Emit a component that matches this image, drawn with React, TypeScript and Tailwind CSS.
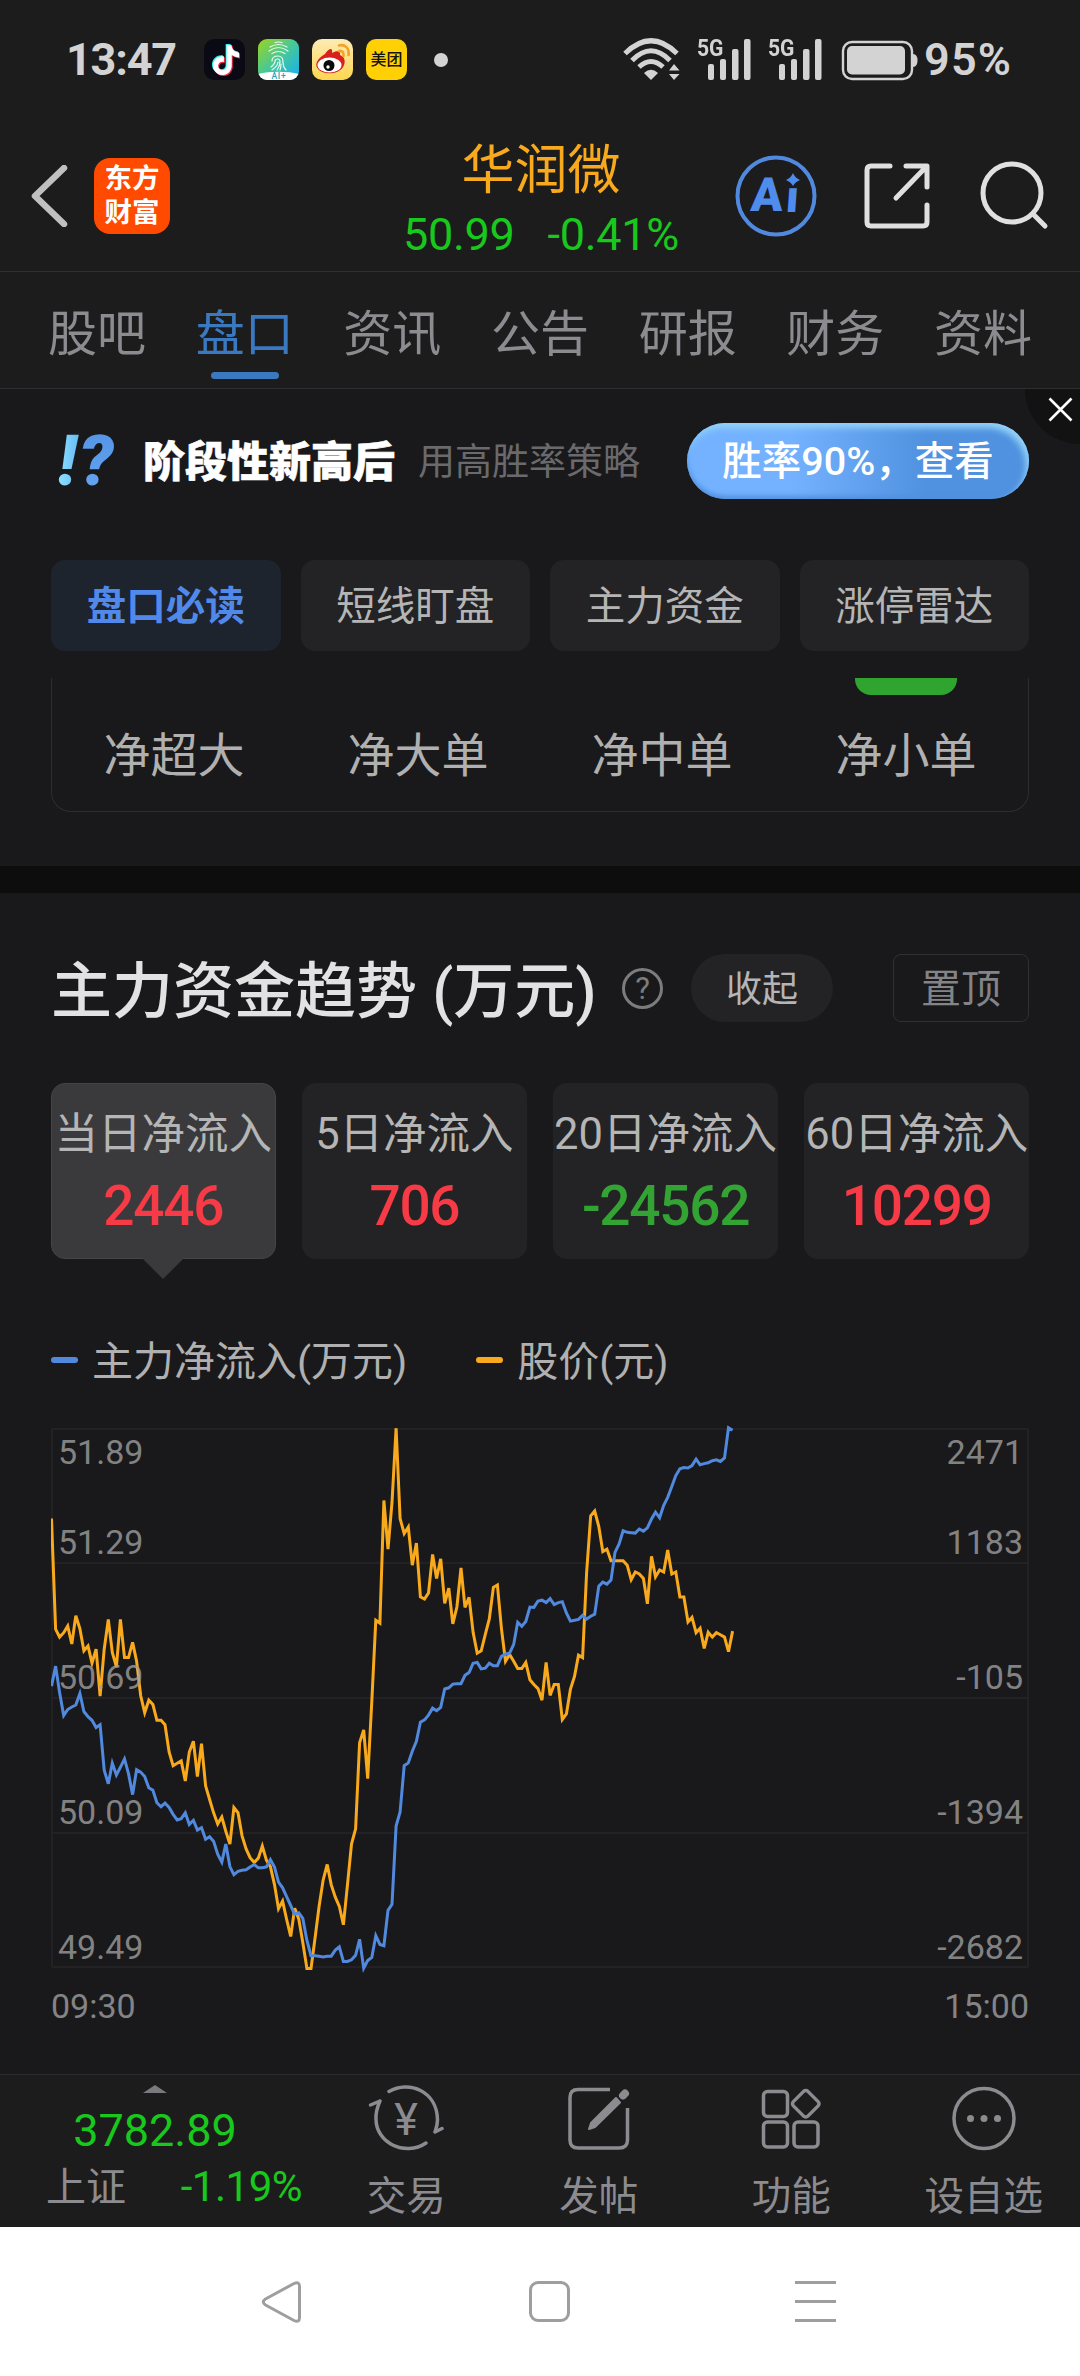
import type { ReactNode } from 'react';
import { clsx } from 'clsx';
import { SiTiktok } from 'react-icons/si';

const tabs = ['股吧', '盘口', '资讯', '公告', '研报', '财务', '资料'];

const pills = ['盘口必读', '短线盯盘', '主力资金', '涨停雷达'];

const orderSizes = [
  { label: '净超大', bar: false },
  { label: '净大单', bar: false },
  { label: '净中单', bar: false },
  { label: '净小单', bar: true },
];

const flows = [
  { label: '当日净流入', value: 2446 },
  { label: '5日净流入', value: 706 },
  { label: '20日净流入', value: -24562 },
  { label: '60日净流入', value: 10299 },
];

// One sample per trading minute, on the scale CHART_TOP..CHART_BOTTOM
const CHART_TOP = 72;
const CHART_BOTTOM = 1411;
const CHART_STEP = 4.054;

const priceLine = [
  295, 570, 590, 579, 562, 607, 537, 569, 624, 612, 655, 620, 737, 620, 546, 628, 664, 546, 641, 641,
  603, 650, 736, 778, 747, 758, 797, 797, 808, 876, 910, 904, 898, 948, 876, 849, 937, 855, 960, 994,
  1028, 1055, 1038, 1073, 1105, 1014, 1027, 1084, 1117, 1139, 1151, 1140, 1110, 1145, 1161, 1206, 1266,
  1247, 1292, 1335, 1265, 1292, 1350, 1415, 1415, 1340, 1260, 1195, 1156, 1206, 1237, 1260, 1306, 1208,
  1105, 1067, 853, 821, 942, 750, 548, 555, 250, 371, 255, 70, 295, 332, 316, 411, 356, 490, 495, 480,
  384, 444, 395, 506, 468, 557, 515, 418, 516, 491, 578, 630, 624, 583, 545, 466, 460, 570, 650, 633,
  650, 668, 668, 653, 696, 708, 718, 747, 653, 735, 708, 708, 795, 781, 720, 688, 635, 641, 430, 288,
  276, 315, 377, 371, 400, 400, 400, 400, 411, 447, 428, 433, 444, 507, 389, 440, 423, 428, 373, 433,
  428, 490, 490, 552, 541, 579, 568, 618, 578, 590, 579, 584, 590, 626, 575,
];

const inflowLine = [
  712, 662, 728, 785, 770, 764, 759, 730, 775, 788, 797, 815, 808, 921, 955, 904, 933, 914, 893, 930,
  982, 920, 926, 937, 965, 971, 1002, 1012, 1003, 1014, 1031, 1045, 1042, 1027, 1056, 1046, 1070, 1064,
  1093, 1087, 1099, 1130, 1150, 1105, 1161, 1181, 1173, 1170, 1169, 1162, 1156, 1164, 1164, 1162, 1144,
  1162, 1200, 1214, 1236, 1258, 1280, 1276, 1290, 1345, 1383, 1383, 1384, 1386, 1384, 1384, 1369, 1361,
  1397, 1397, 1393, 1382, 1342, 1414, 1395, 1387, 1333, 1355, 1358, 1270, 1255, 1060, 1025, 910, 903,
  874, 849, 802, 796, 784, 767, 773, 765, 719, 716, 707, 706, 706, 685, 678, 655, 653, 669, 667, 655,
  661, 661, 638, 632, 630, 608, 553, 563, 551, 515, 516, 500, 498, 504, 494, 509, 504, 502, 530, 550,
  548, 546, 536, 545, 538, 533, 463, 453, 458, 448, 379, 358, 325, 329, 330, 331, 321, 326, 318, 296,
  279, 293, 262, 242, 215, 188, 171, 168, 169, 163, 147, 161, 158, 156, 151, 149, 153, 144, 69, 75,
];

const axis = [
  { line: 10, text: 45, price: '51.89', flow: '2471' },
  { line: 144, text: 135, price: '51.29', flow: '1183' },
  { line: 279, text: 270, price: '50.69', flow: '-105' },
  { line: 414, text: 405, price: '50.09', flow: '-1394' },
  { line: 548, text: 540, price: '49.49', flow: '-2682' },
];

function toPoints(values: number[]) {
  const k = 538 / (CHART_BOTTOM - CHART_TOP);
  return values
    .map((v, i) => `${(0.5 + i * CHART_STEP).toFixed(1)},${(10 + (v - CHART_TOP) * k).toFixed(1)}`)
    .join(' ');
}

function Signal() {
  return (
    <div className="relative h-[44px] w-[55px]">
      <span className="absolute -top-[4px] left-0 origin-left scale-x-[0.880] text-[24px] leading-[30px] font-bold text-[#d3d3d3]">5G</span>
      <svg width="55" height="44" viewBox="0 0 55 44" fill="#d3d3d3">
        <rect x="11" y="27" width="6" height="16" rx="2" />
        <rect x="23" y="22" width="6" height="21" rx="2" />
        <rect x="35" y="12" width="6.5" height="31" rx="2" />
        <rect x="47" y="2" width="6.5" height="41" rx="2" />
      </svg>
    </div>
  );
}

function StatusBar() {
  return (
    <div className="flex h-[118px] items-center pr-[68px] pl-[66px]">
      <span className="w-[138px] pt-[1px] text-[45px] leading-[60px] font-bold tracking-[-1.200px] text-[#d3d3d3]">13:47</span>
      <div className="flex gap-[13px]">
        {/* Douyin */}
        <div className="relative mt-[1px] h-[41px] w-[41px] rounded-[10px] bg-[#0a0a14]">
          <SiTiktok className="absolute top-[5px] left-[6px] h-[30px] w-[30px] text-[#25f4ee]" />
          <SiTiktok className="absolute top-[7px] left-[8px] h-[30px] w-[30px] text-[#fe2c55]" />
          <SiTiktok className="absolute top-[6px] left-[7px] h-[30px] w-[30px] text-white" />
        </div>
        {/* Fingerprint assistant */}
        <svg className="mt-[1px] overflow-visible" width="41" height="41" viewBox="0 0 41 41" fill="none">
          <defs>
            <linearGradient id="finger" x1="0" y1="0" x2="1" y2="1">
              <stop offset="0" stopColor="#9bd51d" />
              <stop offset="0.5" stopColor="#45c79c" />
              <stop offset="1" stopColor="#13aef5" />
            </linearGradient>
            <clipPath id="fingerClip"><rect width="41" height="41" rx="9" /></clipPath>
          </defs>
          <g clipPath="url(#fingerClip)">
            <rect width="41" height="41" fill="url(#finger)" />
            <path d="M0 35C12 32 29 32 41 35V41H0Z" fill="#fff" />
          </g>
          <g stroke="#e9fbef" strokeWidth="1.200" strokeLinecap="round">
            <path d="M17 3.500q3.500-1 7 0M12 8q8.500-5 17 0M11 12q9.500-7 19 0M14 14.500q6.500-4 13 0" />
            <path d="M14 22q0-5 6-5 5 0 5 6 0 5 3 8M13 28q4-3 4-6 0-2 3-2 2 0 2 3 0 4-3 8M14 31q6-4 6-8M23 25q0 3-1 6" />
          </g>
          <text x="21" y="40" textAnchor="middle" fontSize="8.500" letterSpacing="0.800" fontWeight="500" fill="#28a4b8">AI+</text>
        </svg>
        {/* Weibo */}
        <svg className="mt-[1px]" width="41" height="41" viewBox="0 0 41 41" fill="none">
          <defs>
            <linearGradient id="weibo" x1="0" y1="0" x2="0" y2="1">
              <stop offset="0" stopColor="#fdebb4" />
              <stop offset="1" stopColor="#fdd650" />
            </linearGradient>
          </defs>
          <rect width="41" height="41" rx="10" fill="url(#weibo)" />
          <path d="M13 15C17 9 21 8 20 14C25 11 29 12 28 16C33 18 34 23 31 28C27 35 12 37 6 30C1 24 8 18 13 15Z" fill="#d9201c" />
          <ellipse cx="17.500" cy="26" rx="12" ry="7.500" fill="#fff" />
          <circle cx="17" cy="26.500" r="5.500" fill="#0b0b0b" />
          <circle cx="16" cy="28" r="1.700" fill="#fff" />
          <path d="M27 6.500C33 5 37.500 9 36.500 16M27 12C30.500 11.500 32 13.500 31.500 17" stroke="#f4a02c" strokeWidth="2.600" strokeLinecap="round" />
        </svg>
        <div className="mt-[1px] flex h-[41px] w-[41px] items-center justify-center rounded-[10px] bg-[#ffd105] text-[16px] font-medium text-[#17140a]">美团</div>
      </div>
      <div className="mt-[2px] ml-[27px] h-[14px] w-[14px] rounded-full bg-[#d3d3d3]" />

      <div className="ml-auto flex items-center">
        <svg width="58" height="44" viewBox="0 0 58 44" fill="none" stroke="#d3d3d3" strokeWidth="5">
          <path d="M2 16.500Q28 -9 54 16.500M9 23.500Q28 4 47 23.500M16 30Q28 19 40 30" />
          <path d="M21 36Q28 29.500 35 36L28 43Z" fill="#d3d3d3" stroke="none" />
          <path d="M46 33.500L51 27L56.500 33.500ZM46 37H56.500L51 43Z" fill="#d3d3d3" stroke="none" />
        </svg>
        <div className="ml-[16px] flex gap-[16px]">
          <Signal />
          <Signal />
        </div>
        <svg className="ml-[18px]" width="78" height="44" viewBox="0 0 78 44" fill="none">
          <rect x="2" y="5" width="69" height="37" rx="9" stroke="#d3d3d3" strokeWidth="2.400" />
          <rect x="6" y="9" width="58" height="28.500" rx="5" fill="#d3d3d3" />
          <path d="M72 17Q76.500 17 76.500 23.500Q76.500 30 72 30Z" fill="#d3d3d3" />
        </svg>
        <span className="ml-[5px] w-[88px] pt-[2px] text-[45px] leading-[60px] font-semibold tracking-[1.200px] whitespace-nowrap text-[#d3d3d3]">95%</span>
      </div>
    </div>
  );
}

function Header() {
  return (
    <header className="flex h-[154px] border-b border-[#2f2f31] pl-[30px]">
      <svg className="mt-[47px]" width="38" height="62" viewBox="0 0 38 62" fill="none" stroke="#c0c0c0" strokeWidth="6.500">
        <path d="M34 3L5 31L34 59" strokeLinejoin="round" strokeLinecap="round" />
      </svg>
      <div className="mt-[40px] ml-[26px] flex h-[76px] w-[76px] flex-col items-center rounded-[16px] bg-[#ff4a00] pt-[4px] text-[27.500px] leading-[34px] font-bold text-white">
        <span>东方</span>
        <span>财富</span>
      </div>
      <div className="ml-[225px] flex w-[292px] flex-col items-center pt-[20px]">
        <h1 className="text-[53px] leading-[66px] text-[#f8aa1c]">华润微</h1>
        <p className="flex gap-[33px] text-[45px] leading-[62px] tracking-[-0.300px] text-[#19c81c]">
          <span>50.99</span>
          <span>-0.41%</span>
        </p>
      </div>
      <svg className="mt-[36px] ml-[48px]" width="82" height="84" viewBox="0 0 82 84">
        <circle cx="41" cy="42" r="38.500" fill="none" stroke="#5189de" strokeWidth="4" />
        <text x="15" y="57" fontSize="47" fontWeight="900" fill="#4f8cec" transform="skewX(-4) translate(4 0)">A</text>
        <text x="50" y="58" fontSize="45" fontWeight="900" fill="#4f8cec" transform="skewX(-4) translate(4 0)">ı</text>
        <path d="M58 19Q60 24 65 26Q60 28 58 32Q56 28 51 26Q56 24 58 19Z" fill="#4f8cec" />
      </svg>
      <svg className="mt-[43px] ml-[46px]" width="70" height="70" viewBox="0 0 70 70" fill="none" stroke="#e0e0e0" strokeWidth="5" strokeLinecap="round" strokeLinejoin="round">
        <path d="M27 5H8Q4 5 4 9V61Q4 65 8 65H60Q64 65 64 61V44" />
        <path d="M43 5H64V26M63 6L33 37" />
      </svg>
      <svg className="mt-[42px] ml-[47px]" width="70" height="72" viewBox="0 0 70 72" fill="none" stroke="#e0e0e0" strokeWidth="5" strokeLinecap="round">
        <circle cx="32" cy="33" r="29" />
        <path d="M53 54L65 66" />
      </svg>
    </header>
  );
}

function Tabs() {
  return (
    <nav className="flex h-[117px] justify-between border-b border-[#2f2f31] px-[48px] pt-[32px]">
      {tabs.map((tab, index) => (
        <div
          key={tab}
          className={clsx(
            'flex flex-col items-center text-[49px] leading-[62px]',
            index === 1 ? 'text-[#3a78bf]' : 'text-[#8c8b90]'
          )}
        >
          {tab}
          {index === 1 && <div className="mt-[6px] h-[7px] w-[68px] rounded-full bg-[#3a78bf]" />}
        </div>
      ))}
    </nav>
  );
}

function Banner() {
  return (
    <div className="relative flex h-[171px] items-start pt-[34px] pr-[51px] pl-[58px]">
      <div className="flex h-[76px] w-[85px] items-center text-[70px] leading-[76px] font-black italic">
        <span className="bg-gradient-to-r from-[#8fe0ff] to-[#62b8f3] bg-clip-text pr-[4px] text-transparent">!</span>
        <span className="-ml-[2px] bg-gradient-to-b from-[#5293e4] to-[#66a7f2] bg-clip-text pr-[8px] text-transparent">?</span>
      </div>
      <span className="pt-[2px] text-[42px] leading-[76px] font-black text-white [-webkit-text-stroke:0.600px_white]">阶段性新高后</span>
      <span className="ml-[23px] pt-[2px] text-[37px] leading-[76px] text-[#6a6a6c]">用高胜率策略</span>
      <button className="ml-auto flex h-[76px] w-[342px] items-center justify-center rounded-full bg-gradient-to-r from-[#74b2ff] from-30% to-[#5092e0] to-70% pt-[2px] text-[39.500px] font-medium whitespace-nowrap text-white shadow-[inset_-3px_5px_6px_#93d2f6,inset_0_-3px_5px_#4f8ede]">
        胜率90%，查看
      </button>
      <div className="absolute top-0 right-0 h-[55px] w-[55px] rounded-bl-[55px] bg-[#121213]">
        <svg className="absolute top-[8px] left-[23px]" width="25" height="25" viewBox="0 0 25 25" stroke="#fff" strokeWidth="2.600">
          <path d="M1.500 1.500L23.500 23.500M23.500 1.500L1.500 23.500" />
        </svg>
      </div>
    </div>
  );
}

function OrderCard() {
  return (
    <>
      <div className="flex gap-[20px] px-[51px]">
        {pills.map((pill, index) => (
          <button
            key={pill}
            className={clsx(
              'h-[91px] flex-1 rounded-[14px] pt-[3px] text-[39.500px]',
              index === 0 ? 'bg-[#1d242e] font-bold text-[#5189ea]' : 'bg-[#232325] text-[#b5b5b5]'
            )}
          >
            {pill}
          </button>
        ))}
      </div>
      <div className="mx-[51px] mt-[27px] flex h-[134px] rounded-b-[20px] border border-t-0 border-[#2d2d2f]">
        {orderSizes.map((size) => (
          <div key={size.label} className="flex flex-1 flex-col items-center">
            <div className={clsx('h-[17px] w-[102px] rounded-b-[16px]', size.bar && 'bg-[#2fa52f]')} />
            <span className="mt-[29px] text-[47px] leading-[64px] text-[#b0b0b0]">{size.label}</span>
          </div>
        ))}
      </div>
    </>
  );
}

function TrendChart() {
  return (
    <>
      <svg className="ml-[51px]" width="978" height="566" viewBox="0 0 978 566">
        <g stroke="#262628" strokeWidth="1.500" fill="none">
          {axis.map((row) => (
            <path key={row.line} d={`M1 ${row.line}H977`} />
          ))}
          <path d="M1 10V548M977 10V548" />
        </g>
        <g fill="none" strokeWidth="3" strokeLinejoin="miter">
          <polyline points={toPoints(priceLine)} stroke="#f9a91c" />
          <polyline points={toPoints(inflowLine)} stroke="#5189de" />
        </g>
        <g fontSize="34" fill="#a0a0a0" fillOpacity="0.800">
          {axis.map((row) => (
            <g key={row.line}>
              <text x="7" y={row.text}>{row.price}</text>
              <text x="972" y={row.text} textAnchor="end">{row.flow}</text>
            </g>
          ))}
        </g>
      </svg>
      <div className="-mt-[1px] flex justify-between px-[51px] text-[34px] leading-[44px] text-[#848486]">
        <span>09:30</span>
        <span>15:00</span>
      </div>
    </>
  );
}

function FundTrend() {
  return (
    <section className="flex-1 pt-[61px]">
      <div className="flex h-[68px] items-center px-[51px]">
        <h2 className="pt-[8px] text-[61px] leading-[68px] font-medium whitespace-nowrap text-[#e2e2e2]">主力资金趋势 (万元)</h2>
        <div className="ml-auto flex items-center">
          <div className="flex h-[41px] w-[41px] items-center justify-center rounded-full border-[3px] border-[#7c7c7e] text-[31px] leading-none text-[#7c7c7e]">?</div>
          <div className="ml-[28px] flex h-[68px] w-[142px] items-center justify-center rounded-full bg-[#232325] pt-[3px] text-[36px] text-[#b5b5b5]">收起</div>
          <div className="ml-[60px] flex h-[68px] w-[136px] items-center justify-center rounded-[8px] border border-[#303032] pt-[4px] text-[40px] text-[#848486]">置顶</div>
        </div>
      </div>

      <div className="mt-[61px] flex justify-between px-[51px]">
        {flows.map((flow, index) => (
          <div
            key={flow.label}
            className={clsx(
              'relative flex h-[176px] w-[224.500px] flex-col items-center rounded-[14px]',
              index === 0 ? 'border border-[#454547] bg-[#3a3a3c] pt-[21px]' : 'bg-[#232325] pt-[22px]'
            )}
          >
            <span className="text-[43.500px] leading-[60px] whitespace-nowrap text-[#b5b5b5]">{flow.label}</span>
            <span
              className={clsx(
                'mt-[9px] text-[55px] leading-[64px] font-medium tracking-[-1.300px]',
                flow.value > 0 ? 'text-[#f63a46]' : 'text-[#33a334]'
              )}
            >
              {flow.value}
            </span>
            {index === 0 && (
              <svg className="absolute top-[173px]" width="42" height="22" viewBox="0 0 42 22">
                <path d="M0 1H42L21 22Z" fill="#3a3a3c" />
              </svg>
            )}
          </div>
        ))}
      </div>

      <div className="mt-[71px] mb-[29px] flex h-[60px] items-center pl-[51px] text-[41px] leading-[60px] text-[#b0b0b0]">
        <i className="h-[6px] w-[27px] rounded-full bg-[#5189de]" />
        <span className="ml-[14px] pt-[4px]">主力净流入(万元)</span>
        <i className="ml-[69px] h-[6px] w-[27px] rounded-full bg-[#f9a91c]" />
        <span className="ml-[14px] pt-[4px]">股价(元)</span>
      </div>
      <TrendChart />
    </section>
  );
}

function Action({ label, children }: { label: string; children: ReactNode }) {
  return (
    <div className="flex w-[192.500px] flex-col items-center pt-[8px]">
      <svg width="76" height="72" viewBox="0 0 76 72" fill="none" stroke="#8c8b90" strokeWidth="3.500" strokeLinecap="round" strokeLinejoin="round">
        {children}
      </svg>
      <span className="mt-[14.500px] text-[39.500px] leading-[54px] text-[#8c8b90]">{label}</span>
    </div>
  );
}

function BottomBar() {
  return (
    <footer className="flex h-[153px] border-t border-[#2b2b2d] bg-[#1c1c1c]">
      <div className="flex w-[310px] flex-col items-center">
        <svg className="mt-[10px]" width="24" height="8" viewBox="0 0 24 8">
          <path d="M0 8L12 0L24 8Z" fill="#7a797e" />
        </svg>
        <span className="mt-[12px] text-[45px] leading-[52px] text-[#19c81c]">3782.89</span>
        <div className="flex w-full justify-between pr-[8px] pl-[46px] leading-[60px]">
          <span className="pt-[1px] text-[40px] text-[#8c8b90]">上证</span>
          <span className="text-[42px] tracking-[-0.500px] text-[#19c81c]">-1.19%</span>
        </div>
      </div>
      <Action label="交易">
        <path d="M21 8.500C41 -3 69 8 69.500 37Q69.500 42 67 49M67 49L74 45.500" />
        <path d="M58 60C37 74 8 60 8 36Q7.500 28 12 18M12 18L2.500 22" />
        <text x="38" y="52" textAnchor="middle" fontSize="45" fill="#8c8b90" stroke="none">¥</text>
      </Action>
      <Action label="发帖">
        <path d="M49 6.500H17Q9 6.500 9 14.500V57Q9 65 17 65H58Q66.500 65 66.500 57V25" strokeLinecap="butt" />
        <path d="M28 46L30 40L55 15L59 19.500L34 44Z" fill="#8c8b90" strokeWidth="2" />
        <path d="M62 12.500L64 10.500" strokeWidth="8" />
      </Action>
      <Action label="功能">
        <rect x="10.500" y="8.500" width="24" height="25" rx="4" />
        <rect x="10.500" y="39" width="24" height="25" rx="4" />
        <rect x="41" y="39" width="24" height="25" rx="4" />
        <rect x="42.500" y="10.500" width="20.500" height="20.500" rx="3" transform="rotate(45 52.750 20.750)" />
      </Action>
      <Action label="设自选">
        <circle cx="38" cy="35.500" r="30" />
        <g fill="#8c8b90" stroke="none">
          <circle cx="24.500" cy="35.500" r="3.500" />
          <circle cx="38" cy="35.500" r="3.500" />
          <circle cx="51.500" cy="35.500" r="3.500" />
        </g>
      </Action>
    </footer>
  );
}

function SystemNav() {
  return (
    <div className="flex h-[149px] items-center bg-white pl-[261px]">
      <svg width="42" height="44" viewBox="0 0 42 44" fill="none" stroke="#9e9e9e" strokeWidth="3">
        <path d="M33 3.500Q38.500 1 38.500 6.500V37.500Q38.500 43 33 40.500L4.500 25Q0 22 4.500 19Z" strokeLinejoin="round" />
      </svg>
      <div className="ml-[226px] h-[41px] w-[41px] rounded-[9px] border-[3px] border-[#9e9e9e]" />
      <div className="ml-[225px] flex w-[41px] flex-col gap-[16px]">
        <div className="h-[3px] bg-[#9e9e9e]" />
        <div className="h-[3px] bg-[#9e9e9e]" />
        <div className="h-[3px] bg-[#9e9e9e]" />
      </div>
    </div>
  );
}

export default function App() {
  return (
    <div className="flex h-[2376px] w-[1080px] flex-col overflow-hidden bg-[#19191b] font-[Roboto,'Noto_Sans_CJK_SC',sans-serif]">
      <div className="bg-[#1c1c1c]">
        <StatusBar />
        <Header />
        <Tabs />
      </div>
      <Banner />
      <OrderCard />
      <div className="mt-[54px] h-[27px] bg-[#0d0d0d]" />
      <FundTrend />
      <BottomBar />
      <SystemNav />
    </div>
  );
}
